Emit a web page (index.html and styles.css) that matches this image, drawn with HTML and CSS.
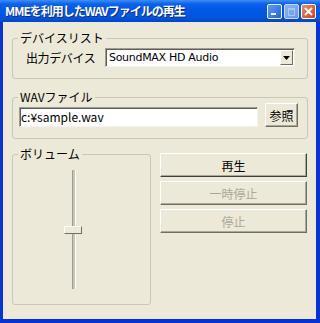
FILE: index.html
```html
<!DOCTYPE html>
<html lang="ja">
<head>
    <meta charset="UTF-8">
    <title>MMEを利用したWAVファイルの再生</title>
    <link rel="stylesheet" href="styles.css">
</head>
<body>
    <div class="window">
        <div class="titlebar">
            <span class="title">MMEを利用したWAVファイルの再生</span>
            <div class="caption-buttons">
                <span class="cap cap-min"></span>
                <span class="cap cap-max"></span>
                <span class="cap cap-close">
                    <svg width="9" height="9" viewBox="0 0 9 9"><path d="M1 1L8 8M8 1L1 8" stroke="#fff" stroke-width="2"/></svg>
                </span>
            </div>
        </div>

        <div class="client">
            <fieldset class="group group-device">
                <legend>デバイスリスト</legend>
                <div class="device-row">
                    <label>出力デバイス</label>
                    <div class="combo">
                        <span class="combo-text">SoundMAX HD Audio</span>
                        <span class="combo-drop">
                            <svg width="7" height="4" viewBox="0 0 7 4"><path d="M0 0H7L3.5 4Z" fill="#000"/></svg>
                        </span>
                    </div>
                </div>
            </fieldset>

            <fieldset class="group group-file">
                <legend>WAVファイル</legend>
                <div class="file-row">
                    <div class="textbox">c:¥sample.wav</div>
                    <button class="btn btn-browse">参照</button>
                </div>
            </fieldset>

            <div class="bottom">
                <fieldset class="group group-volume">
                    <legend>ボリューム</legend>
                    <div class="slider">
                        <span class="slider-track"></span>
                        <span class="slider-thumb"></span>
                    </div>
                </fieldset>
                <div class="actions">
                    <button class="btn btn-default">再生</button>
                    <button class="btn" disabled>一時停止</button>
                    <button class="btn" disabled>停止</button>
                </div>
            </div>
        </div>
    </div>
</body>
</html>
```

FILE: styles.css
```css
body {
    margin: 0;
    font-family: "Noto Sans CJK JP", sans-serif;
    font-size: 12px;
    color: #000;
    background: #fff;
}

.window {
    width: 320px;
    height: 323px;
    box-sizing: border-box;
    display: flex;
    flex-direction: column;
    background: #0831d9;
}

.titlebar {
    height: 22px;
    display: flex;
    align-items: center;
    padding: 0 4px 0 5px;
    background: linear-gradient(#3d8ef8 0%, #0a62eb 18%, #0058e6 45%, #0056e1 80%, #0046c4 100%);
}

.title {
    flex: 1;
    color: #fff;
    font-weight: bold;
    font-size: 12px;
    line-height: 14px;
    text-shadow: 1px 1px #0d2b8f;
    letter-spacing: -1px;
}

.caption-buttons {
    display: flex;
    gap: 2px;
    margin-top: 1px;
}

.cap {
    width: 13px;
    height: 13px;
    border: 1px solid #fff;
    border-radius: 2px;
    display: flex;
    align-items: center;
    justify-content: center;
    background: linear-gradient(135deg, #5a9bff, #2463e2);
    position: relative;
}

.cap-min::after {
    content: "";
    position: absolute;
    left: 3px;
    bottom: 3px;
    width: 5px;
    height: 2px;
    background: #fff;
}

.cap-max {
    background: linear-gradient(135deg, #8ab4f6, #6b97ea);
    border-color: #c9dcfb;
}

.cap-max::after {
    content: "";
    position: absolute;
    left: 3px;
    top: 3px;
    width: 5px;
    height: 5px;
    border: 1px solid #a9c4f3;
    border-top-width: 2px;
}

.cap-close {
    background: linear-gradient(135deg, #f08a64, #d6401c);
}

.client {
    flex: 1;
    margin: 0 4px 4px 3px;
    padding: 0 8px 0 9px;
    background: #ece9d8;
    display: flex;
    flex-direction: column;
}

.group {
    margin: 0;
    padding: 0;
    min-width: 0;
    border: 1px solid #c9c7b8;
    border-radius: 3px;
}

.group legend {
    margin-left: 5px;
    padding: 0 2px;
    line-height: 12px;
    font-size: 12px;
}

.group-device {
    margin-top: 10px;
}

.device-row {
    display: flex;
    align-items: center;
    padding: 4px 12px 11px 13px;
}

.device-row label {
    flex: 1;
    letter-spacing: -0.4px;
}

.combo {
    width: 190px;
    height: 19px;
    box-sizing: border-box;
    display: flex;
    align-items: center;
    background: #fff;
    border: 1px solid;
    border-color: #9d9d91 #f4f3ee #f4f3ee #9d9d91;
    box-shadow: inset 1px 1px #5f5e58;
}

.combo-text {
    flex: 1;
    padding-left: 3px;
    font-family: "DejaVu Sans", sans-serif;
    font-size: 11px;
    letter-spacing: -0.3px;
}

.combo-drop {
    width: 13px;
    height: 15px;
    box-sizing: border-box;
    margin-right: 1px;
    display: flex;
    align-items: center;
    justify-content: center;
    background: #ece9d8;
    border: 1px solid;
    border-color: #fff #716f64 #716f64 #fff;
}

.group-file {
    margin-top: 12px;
}

.file-row {
    display: flex;
    align-items: flex-end;
    gap: 7px;
    padding: 0 9px 11px 6px;
}

.textbox {
    flex: 1;
    height: 20px;
    box-sizing: border-box;
    padding: 0 1px;
    line-height: 17px;
    background: #fff;
    border: 1px solid;
    border-color: #9d9d91 #f4f3ee #f4f3ee #9d9d91;
    box-shadow: inset 1px 1px #5f5e58;
}

.btn {
    font-family: "Noto Sans CJK JP", sans-serif;
    font-size: 12px;
    height: 24px;
    padding: 0;
    background: #ece9d8;
    color: #000;
    border: 1px solid;
    border-color: #fff #716f64 #716f64 #fff;
    box-shadow: inset -1px -1px #aca899;
}

.btn:disabled {
    color: #aca899;
}

.btn-browse {
    width: 33px;
}

.btn-default {
    border-color: #fff #404040 #404040 #fff;
}

.bottom {
    display: flex;
    gap: 9px;
    margin-top: 9px;
}

.group-volume {
    width: 139px;
    height: 157px;
    box-sizing: border-box;
}

.slider {
    position: relative;
    width: 18px;
    height: 119px;
    margin: 10px 0 0 51px;
}

.slider-track {
    position: absolute;
    left: 8px;
    top: 0;
    width: 4px;
    height: 100%;
    box-sizing: border-box;
    border-left: 1px solid #9d9d91;
    border-right: 1px solid #fff;
    background: #c8c5b4;
}

.slider-thumb {
    position: absolute;
    left: 0;
    top: 56px;
    width: 18px;
    height: 8px;
    box-sizing: border-box;
    background: #ece9d8;
    border: 1px solid;
    border-color: #fff #716f64 #716f64 #fff;
}

.actions {
    flex: 1;
    display: flex;
    flex-direction: column;
    gap: 4px;
    margin: 5px 1px 0 0;
}
```
